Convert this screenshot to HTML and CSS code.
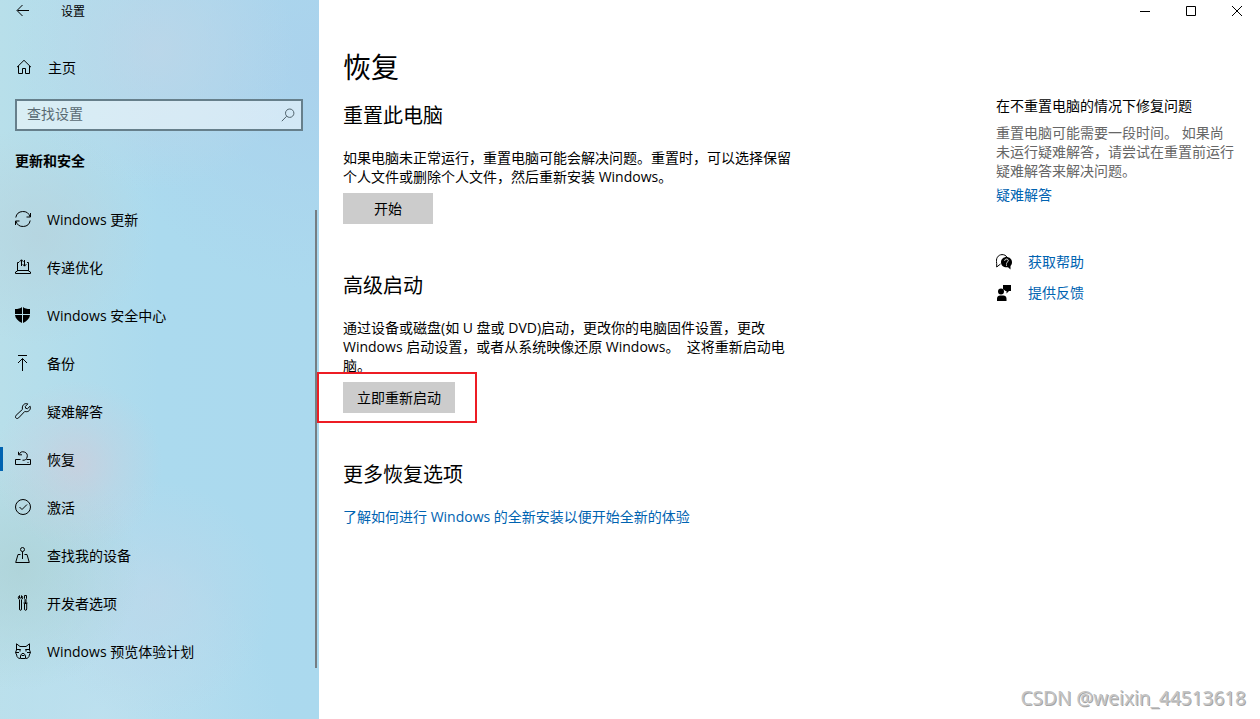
FILE: index.html
```html
<!DOCTYPE html>
<html lang="zh-CN">
<head>
<meta charset="utf-8">
<title>设置</title>
<link rel="stylesheet" href="styles.css">
</head>
<body>
<div class="window">
  <aside class="sidebar">
    <header class="titlebar">
      <button class="back" type="button" aria-label="返回">
        <svg class="icon" viewBox="0 0 16 16"><path d="M14 7.500H2.500M7.500 2 2 7.500l5.500 5.500"/></svg>
      </button>
      <span class="title">设置</span>
    </header>
    <a class="home" href="#">
      <svg class="icon" viewBox="0 0 16 16"><path d="M1 8.200 8 1.300l7 6.900M2.500 7v7.500h4V9.500h3v5h4V7"/></svg>
      <span>主页</span>
    </a>
    <div class="search">
      <input type="text" placeholder="查找设置" aria-label="查找设置">
      <svg class="icon" viewBox="0 0 16 16"><circle cx="9.700" cy="6.200" r="4.200"/><path d="M6.700 9.200 1.800 14.200"/></svg>
    </div>
    <h2 class="group">更新和安全</h2>
    <nav class="nav">
      <a href="#">
        <svg class="icon" viewBox="0 0 16 16"><path d="M.8 6.500A7.300 7.300 0 0 1 15 5.800M15.500 2v4h-4M15.200 9.500A7.300 7.300 0 0 1 1 10.200M.5 14v-4h4"/></svg>
        <span>Windows 更新</span></a>
      <a href="#">
        <svg class="icon" viewBox="0 0 16 16"><path d="M4 3.500H2.500v8.500L.5 13v1.500h15V13l-2-1V3.500H12M2.500 11.500h11M6.500 7V.8M4.500 2.800l2-2 2 2M9.500 1v6M7.700 5.200l1.800 2 1.800-2"/></svg>
        <span>传递优化</span></a>
      <a href="#">
        <svg class="icon solid" viewBox="0 0 16 16"><path d="M7 0C5.500 1.500 3 2 0 2v5h7zM8 0v7h7V2C12 2 9.500 1.500 8 0zM0 8c.3 3.500 3 6 7 8V8zM8 8v8c4-2 6.700-4.500 7-8z"/></svg>
        <span>Windows 安全中心</span></a>
      <a href="#">
        <svg class="icon" viewBox="0 0 16 16"><path d="M3 .5h9M7.500 16V3.500M3 8l4.500-4.500L12 8"/></svg>
        <span>备份</span></a>
      <a href="#">
        <svg class="icon" viewBox="0 0 16 16"><path d="M12.800.9 10.300 3.500l.4 1.800 1.800.4 2.600-2.500c1 2.600-.7 5.300-3.300 5.500-.8 0-1.300-.1-2-.3l-6.200 6.500c-.8.8-2 .8-2.700.1-.7-.8-.6-1.900.2-2.700l6.400-6C6.600 3 9-.4 12.800.9z"/></svg>
        <span>疑难解答</span></a>
      <a href="#" class="active" aria-current="page">
        <svg class="icon" viewBox="0 0 16 16"><path d="M5.500 8.500h-5v5h15v-5h-4M12.500 11.500h1M3.500.8v3h3.500M4.200 3.400a4.200 4.200 0 1 1 3.300 5.800"/></svg>
        <span>恢复</span></a>
      <a href="#">
        <svg class="icon" viewBox="0 0 16 16"><circle cx="8" cy="8" r="7.500"/><path d="m4.500 8 2.500 2.500 5-5"/></svg>
        <span>激活</span></a>
      <a href="#">
        <svg class="icon" viewBox="0 0 16 16"><circle cx="7.500" cy="2.500" r="2"/><path d="M7.500 4.500V12M5.500 7.500H3L.7 15.500h13.600L12 7.500H9.500"/></svg>
        <span>查找我的设备</span></a>
      <a href="#">
        <svg class="icon" viewBox="0 0 16 16"><path d="M4.500.6C2.800 1.500 3 4 4.500 4.700V14c0 1.800 2 1.800 2 0V4.700C8 4 8.200 1.500 6.500.6V3h-2zM9.500.5h2v3l-.5 1v3h-1v-3l-.5-1zM9.500 8.500h2.200V14c0 1.800-2.200 1.800-2.200 0zM8.500 8h4"/></svg>
        <span>开发者选项</span></a>
      <a href="#">
        <svg class="icon" viewBox="0 0 16 16"><path d="M1.500 7V.8L5 3.500h6L14.500.8V7M1.500 7 .5 9.500l1.200 2.500c0 2 1.300 3.500 3.800 3.500h5c2.500 0 3.800-1.500 3.800-3.500l1.200-2.500-1-2.500M2 6.500h3.500M10.500 6.500H14M5 6v2.500M11 6v2.500M.5 9.500h3.500M12 9.500h3.500M5.500 15v-2.500L7 10.500h2l1.500 2V15M6.500 12.500h3"/></svg>
        <span>Windows 预览体验计划</span></a>
    </nav>
  </aside>

  <div class="page">
    <div class="controls">
      <button type="button" aria-label="最小化"><svg viewBox="0 0 10 10"><path d="M0 5.500h10"/></svg></button>
      <button type="button" aria-label="最大化"><svg viewBox="0 0 10 10"><path d="M.5.5h9v9h-9z"/></svg></button>
      <button type="button" aria-label="关闭"><svg viewBox="0 0 10 10"><path d="m0 0 10 10M10 0 0 10"/></svg></button>
    </div>
    <div class="columns">
      <main class="content">
        <h1>恢复</h1>
        <section>
          <h2>重置此电脑</h2>
          <p>如果电脑未正常运行，重置电脑可能会解决问题。重置时，可以选择保留个人文件或删除个人文件，然后重新安装 Windows。</p>
          <button class="action" type="button">开始</button>
        </section>
        <section>
          <h2>高级启动</h2>
          <p>通过设备或磁盘(如 U 盘或 DVD)启动，更改你的电脑固件设置，更改 Windows 启动设置，或者从系统映像还原 Windows。&nbsp; 这将重新启动电脑。</p>
          <div class="marked"><button class="action" type="button">立即重新启动</button></div>
        </section>
        <section>
          <h2>更多恢复选项</h2>
          <a href="#">了解如何进行 Windows 的全新安装以便开始全新的体验</a>
        </section>
      </main>
      <aside class="help">
        <h3>在不重置电脑的情况下修复问题</h3>
        <p>重置电脑可能需要一段时间。 如果尚未运行疑难解答，请尝试在重置前运行疑难解答来解决问题。</p>
        <a href="#">疑难解答</a>
        <ul class="support">
          <li>
            <svg class="icon" viewBox="0 0 16 16"><path d="M4.500 10 .7 13V9.500C-.5 4.500 2 .8 6 .6c2.500 0 4 1 4.800 2.400"/><path class="fill" d="M10.500 3c3 0 5.500 2.200 5.500 5.200 0 1.700-.7 3-1.500 3.800V15.500L12 13.200c-4 .8-7-1.700-7-5C5 5.200 7.500 3 10.500 3z"/><path class="cut" d="M8.700 6.800c0-2.400 3.600-2.200 3.600-.2 0 1.500-1.800 1.400-1.800 3M10.500 10.500v1.200"/></svg>
            <a href="#">获取帮助</a>
          </li>
          <li>
            <svg class="icon solid" viewBox="0 0 16 16"><path d="M7 0h8v6h-2l-2.500 2.500V6H9.500L7 4zM5 3.500a3 3 0 1 1 0 6 3 3 0 0 1 0-6zM1 16v-2.500c0-2 1.500-3 3-3h3.500c1.500 0 3 1 3 3V16z"/></svg>
            <a href="#">提供反馈</a>
          </li>
        </ul>
      </aside>
    </div>
  </div>
  <div class="watermark">CSDN @weixin_44513618</div>
</div>
</body>
</html>
```
FILE: styles.css
```css
*, *::before, *::after { box-sizing: border-box; }

body {
  margin: 0;
  background: #fff;
  color: #000;
  font: 14px/19px "Open Sans", "Noto Sans CJK SC", sans-serif;
}

h1, h2, h3, p, ul { margin: 0; padding: 0; font-weight: 400; }
a { color: #0063b1; text-decoration: none; }
button { border: 0; padding: 0; background: none; color: inherit; font: inherit; }

.icon {
  width: 16px;
  height: 16px;
  flex: none;
  fill: none;
  stroke: #000;
  stroke-width: 1;
}
.icon.solid { fill: #000; stroke: none; }
.icon .fill { fill: #000; stroke: none; }
.icon .cut { stroke: #fff; }

.window { position: relative; display: flex; min-height: 100vh; }

/* Sidebar */
.sidebar {
  width: 319px;
  flex: none;
  background:
    radial-gradient(circle at 78px 465px, rgba(206, 204, 218, .7) 0, rgba(206, 204, 218, .3) 40px, transparent 85px),
    radial-gradient(circle at 155px 50px, rgba(190, 214, 232, .8) 0, transparent 140px),
    radial-gradient(circle at 40px 235px, rgba(182, 210, 220, .7) 0, transparent 110px),
    radial-gradient(circle at 20px 570px, rgba(174, 210, 214, .8) 0, transparent 120px),
    radial-gradient(circle at 155px 600px, rgba(188, 216, 234, .8) 0, transparent 120px),
    radial-gradient(circle at 100px 719px, rgba(192, 225, 239, .8) 0, transparent 180px),
    radial-gradient(circle at 319px 70px, rgba(170, 209, 236, .9) 0, transparent 220px),
    linear-gradient(90deg, #b8dfea, #abdaee 50%, #abd9ee);
}
.titlebar { display: flex; align-items: center; height: 22px; padding-left: 15px; font-size: 12px; }
.back { display: flex; width: 46px; }
.home {
  display: flex;
  align-items: center;
  gap: 16px;
  height: 40px;
  margin-top: 25px;
  padding-left: 16px;
  color: #000;
}
.search {
  display: flex;
  align-items: center;
  height: 32px;
  margin: 12px 16px 0 15px;
  padding: 0 5px 0 10px;
  border: 2px solid #667f8b;
  background: rgba(255, 255, 255, .48);
}
.search input {
  flex: 1;
  min-width: 0;
  padding: 0 0 3px;
  border: 0;
  outline: 0;
  background: none;
  font: inherit;
}
.search input::placeholder { color: #596a73; opacity: 1; }
.search .icon { stroke: #4f626c; }
.group { margin: 20px 0 0 15px; font-size: 14px; line-height: 20px; font-weight: 700; }

.nav { position: relative; margin-top: 24px; }
.nav::after {
  content: "";
  position: absolute;
  top: 15px;
  bottom: 7px;
  right: 2px;
  width: 2px;
  background: #757d82;
}
.nav a {
  display: flex;
  align-items: center;
  gap: 16px;
  height: 48px;
  padding-left: 15px;
  color: #000;
}
.nav .active { padding-left: 0; gap: 0; }
.nav .active::before { content: ""; width: 3px; height: 24px; margin-right: 12px; background: #0063b1; }
.nav .active .icon { margin-right: 16px; }

/* Page */
.page { flex: 1; min-width: 0; }
.controls { display: flex; justify-content: flex-end; height: 22px; }
.controls button { display: flex; align-items: center; justify-content: center; width: 46px; }
.controls svg { width: 10px; height: 10px; fill: none; stroke: #000; overflow: visible; }

.columns { display: flex; justify-content: space-between; gap: 24px; padding: 0 24px; }
.content { flex: 0 1 450px; padding-top: 24px; }
.content h1 { font-size: 28px; line-height: 42px; }
.content h2 { font-size: 20px; line-height: 28px; margin-bottom: 18px; }
.content section { margin-top: 48px; }
.content h1 + section { margin-top: 14px; }
.action {
  display: block;
  min-width: 90px;
  height: 31px;
  margin-top: 7px;
  padding: 0 14px;
  background: #ccc;
}
.marked { position: relative; }
.marked::after {
  content: "";
  position: absolute;
  top: -10px;
  left: -26px;
  width: 160px;
  height: 51px;
  border: 2px solid #ed1c24;
  pointer-events: none;
}

.help { flex: 0 0 240px; padding-top: 74px; }
.help h3 { font-size: 14px; }
.help p { margin: 8px 0 5px; color: #666; }
.support { list-style: none; margin-top: 42px; }
.support li { display: flex; align-items: center; gap: 16px; height: 31px; }

.watermark {
  position: absolute;
  right: 14px;
  bottom: 7px;
  color: #c4c4c4;
  font: 19px/28px "Noto Sans", sans-serif;
  text-shadow: 1px 1px 0 #a4a4a4;
}
```
